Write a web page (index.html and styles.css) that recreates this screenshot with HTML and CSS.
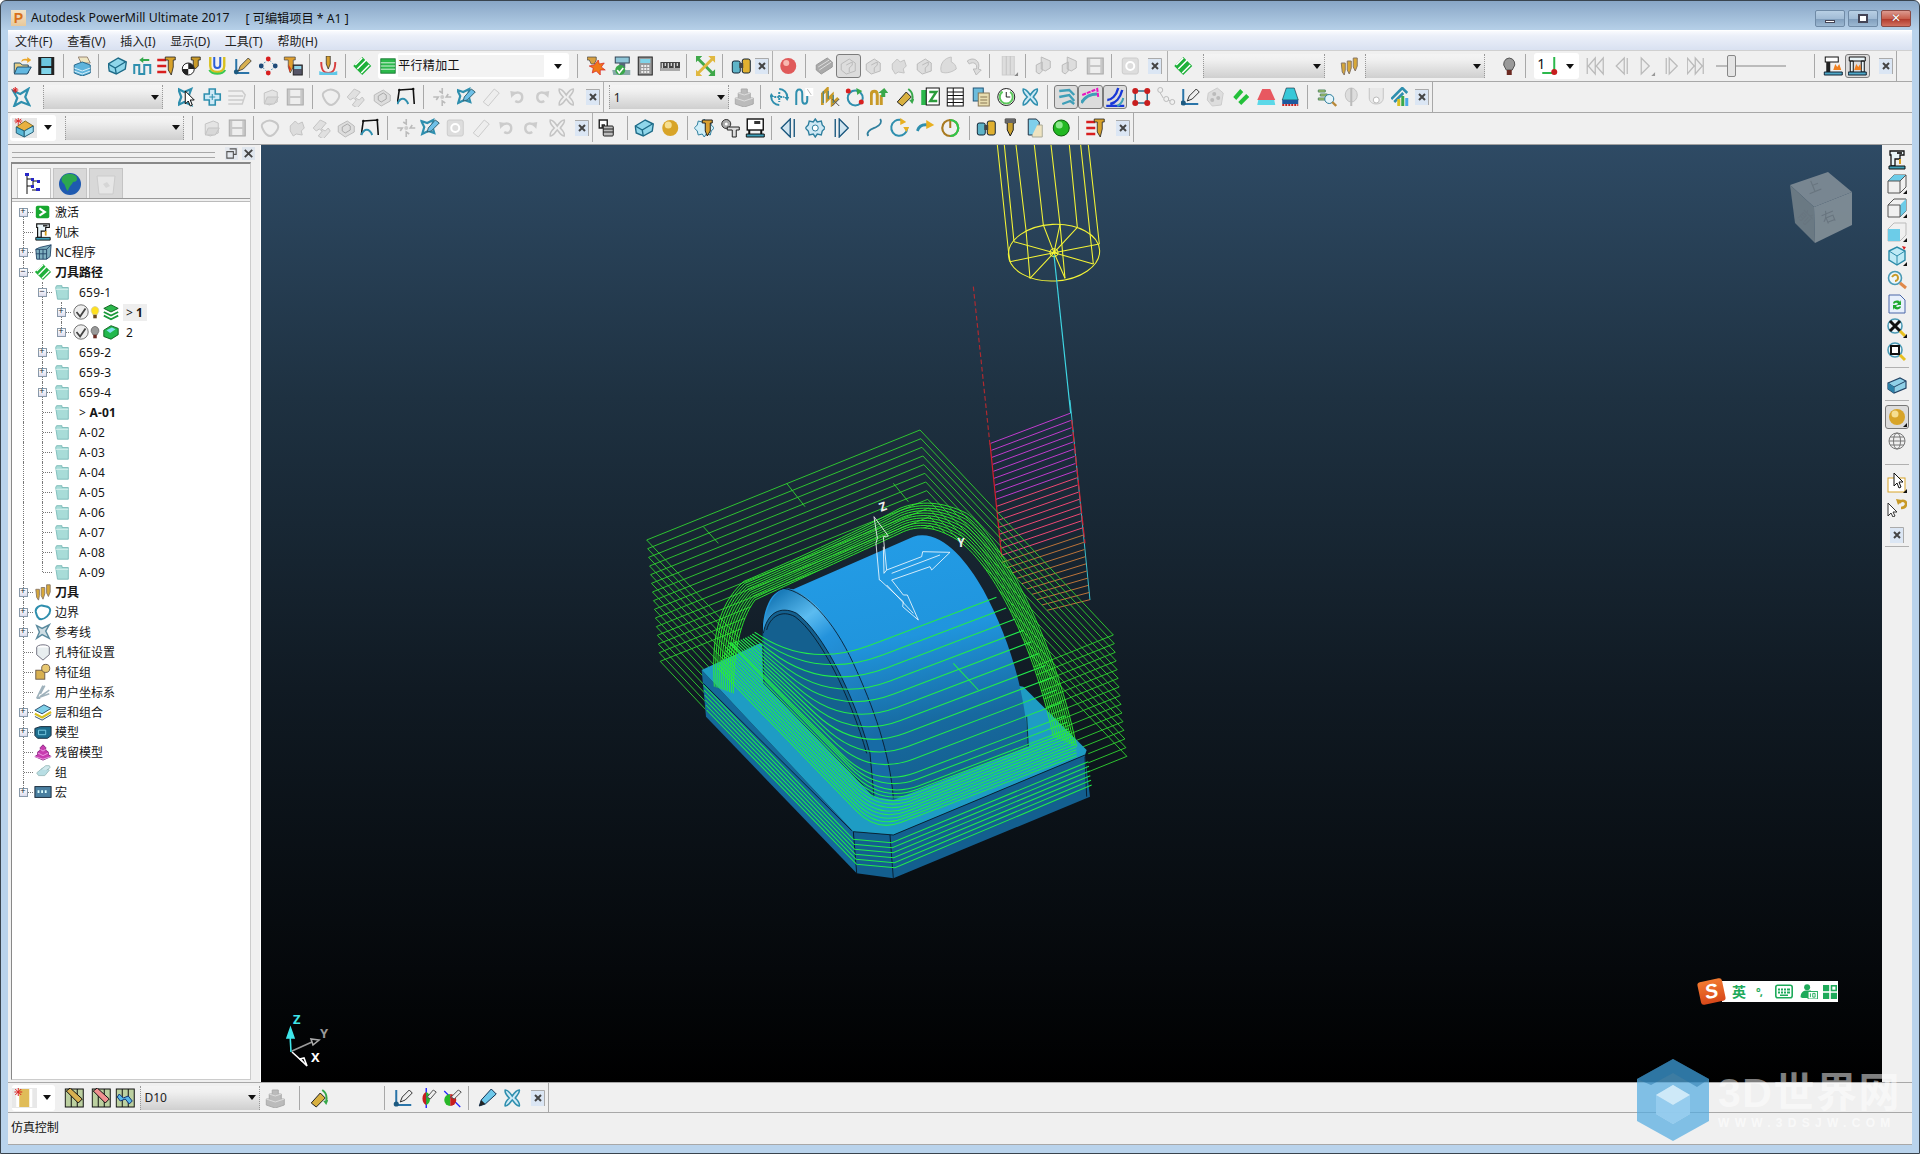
FILE: index.html
```html
<!DOCTYPE html>
<html lang="zh">
<head>
<meta charset="utf-8">
<title>Autodesk PowerMill Ultimate 2017</title>
<link rel="stylesheet" href="styles.css">
</head>
<body>
<svg class="defs" aria-hidden="true">
<symbol id="open" viewBox="0 0 20 20"><path d="M2 7h6l2 2h6v8H2z" fill="#e8cf86" stroke="#24506e"/><path d="M2 18l3-7h14l-4 7z" fill="#63b8e0" stroke="#24506e"/><path d="M9 6c0-3 3-4 6-3V1l4 3-4 3V5c-3-1-5 0-6 1z" fill="#eaa62a"/></symbol>
<symbol id="save" viewBox="0 0 20 20"><rect x="2" y="1" width="16" height="18" fill="#222"/><rect x="5" y="2" width="10" height="8" fill="#6cc6de"/><rect x="5" y="12" width="10" height="6" fill="#7fd3e8"/></symbol>
<symbol id="batch" viewBox="0 0 20 20"><path d="M6 1h9l3 6H9z" fill="#eee5c0" stroke="#987"/><path d="M2 9l8-3 8 3v8l-8 3-8-3z" fill="#5fb4dc" stroke="#2a6b8e"/><path d="M2 12l8 3 8-3M2 15l8 3 8-3" stroke="#d8f0fa" fill="none"/></symbol>
<symbol id="block" viewBox="0 0 20 20"><path d="M1 8l10-6 8 4-1 7-9 5-7-3z" fill="#8fd6ea" stroke="#1e6b88" stroke-width="1.4"/><path d="M1 8l7 4 10-6M8 12l1 6" stroke="#1e6b88" fill="none" stroke-width="1.4"/></symbol>
<symbol id="leads" viewBox="0 0 20 20"><path d="M2 18V9h5v9h5V9h6v9" fill="none" stroke="#2f8fae" stroke-width="2"/><path d="M7 4l4-3v2h6v2h-6v2z" fill="#33a84a"/></symbol>
<symbol id="tp" viewBox="0 0 20 20"><path d="M1 4h9M1 10h9M1 16h9" stroke="#d81e1e" stroke-width="2.4"/><path d="M9 1h10v3h-2v7l-2 8-3-5V4H9z" fill="#d8a22a" stroke="#222" stroke-width=".8"/></symbol>
<symbol id="ball" viewBox="0 0 20 20"><path d="M10 1h9v3h-2v6l-3 3-2-2V4h-2z" fill="#c99a2a" stroke="#222" stroke-width=".8"/><circle cx="7" cy="13" r="6" fill="#fff" stroke="#222"/><path d="M7 7a6 6 0 0 1 6 6H7zM7 13v6a6 6 0 0 1-6-6z" fill="#222"/></symbol>
<symbol id="uu" viewBox="0 0 20 20"><path d="M3 1v9c0 8 14 8 14 0V1" fill="none" stroke="#d8c020" stroke-width="2.4"/><path d="M7 1v8c0 4 6 4 6 0V1" fill="none" stroke="#2a5fd8" stroke-width="2"/><path d="M2 14c3 5 13 5 16 0" fill="none" stroke="#3cc850" stroke-width="2"/></symbol>
<symbol id="axpen" viewBox="0 0 20 20"><path d="M4 3v14h13" fill="none" stroke="#2a74a8" stroke-width="2"/><circle cx="4" cy="16" r="2.4" fill="#1e5a80"/><path d="M6 15l2-5 8-8 3 3-8 8z" fill="#d8b050" stroke="#333" stroke-width=".8"/></symbol>
<symbol id="dots" viewBox="0 0 20 20"><path d="M10 3L3 10l7 7 7-7z" fill="none" stroke="#48a" stroke-dasharray="2 2"/><circle cx="10" cy="3" r="2.4" fill="#d81e1e"/><circle cx="3" cy="10" r="2.4" fill="#1e4a78"/><circle cx="17" cy="10" r="2.4" fill="#1e4a78"/><circle cx="10" cy="17" r="2.4" fill="#d81e1e"/></symbol>
<symbol id="tcalc" viewBox="0 0 20 20"><path d="M1 1h11v3h-2v7l-3 6-2-6V4H1z" fill="#e0a030" stroke="#444" stroke-width=".7"/><path d="M5 8l3 5-2 3z" fill="#d83820"/><rect x="10" y="9" width="9" height="10" fill="#556" stroke="#222"/><rect x="11" y="10" width="7" height="3" fill="#8fd6ea"/></symbol>
<symbol id="cutsurf" viewBox="0 0 20 20"><path d="M8 0h4v8l-2 5-2-5z" fill="#d8a030" stroke="#222" stroke-width=".7"/><path d="M3 6c0 8 2 11 7 11s7-3 7-11" fill="none" stroke="#d84040" stroke-width="2"/><path d="M1 15c4 2 14 2 18 0v4H1z" fill="#5fc8e8"/></symbol>
<symbol id="gs" viewBox="0 0 20 20"><path d="M10 1l9 9-9 9-9-9z" fill="#1fb13a"/><path d="M3 9l7-7M5 13l9-9M9 17l8-8" stroke="#fff" stroke-width="1.5"/></symbol>
<symbol id="glist" viewBox="0 0 20 20"><rect x="1" y="1" width="18" height="18" fill="#2cb84c" stroke="#0d6e28"/><path d="M1 6h18M1 10h18M1 14h18" stroke="#dff5e3" stroke-width="1.2"/></symbol>
<symbol id="burst" viewBox="0 0 20 20"><path d="M1 1h9v3L8 8 5 8 3 4H1z" fill="#d8a040" stroke="#444" stroke-width=".7"/><path d="M12 4l1 4 5-1-3 4 4 3-5 0 0 5-4-4-4 2 1-5-4-2 5-1z" fill="#f07818" stroke="#d82020" stroke-width=".7"/></symbol>
<symbol id="chk" viewBox="0 0 20 20"><rect x="4" y="1" width="14" height="6" fill="#8fc6d8" stroke="#345"/><rect x="8" y="7" width="6" height="5" fill="#567"/><path d="M2 19l-1-5h18v5z" fill="#8aa"/><circle cx="9" cy="14" r="5" fill="#3aa84a"/><path d="M6 14l2 3 4-5" stroke="#fff" stroke-width="1.6" fill="none"/></symbol>
<symbol id="calc" viewBox="0 0 20 20"><rect x="3" y="1" width="14" height="18" fill="#999" stroke="#222"/><rect x="5" y="3" width="10" height="4" fill="#7fd3e8"/><path d="M6 9h2v2H6zM9 9h2v2H9zM12 9h2v2h-2zM6 12h2v2H6zM9 12h2v2H9zM12 12h2v2h-2zM6 15h2v2H6zM9 15h2v2H9zM12 15h2v2h-2z" fill="#eee"/></symbol>
<symbol id="ruler" viewBox="0 0 20 20"><rect x="0" y="6" width="20" height="9" fill="#444"/><path d="M2 7v5M5 7v3M8 7v5M11 7v3M14 7v5M17 7v3" stroke="#fff"/><rect x="0" y="12" width="20" height="3" fill="#aaa"/></symbol>
<symbol id="xarrows" viewBox="0 0 20 20"><path d="M3 3l14 14" stroke="#3fa84a" stroke-width="3"/><path d="M17 3L3 17" stroke="#e0b840" stroke-width="3"/><path d="M0 0h7L0 7zM20 20h-7l7-7z" fill="#3fa84a"/><path d="M20 0v7l-7-7zM0 20v-7l7 7z" fill="#e0b840"/></symbol>
<symbol id="binoc" viewBox="0 0 20 20"><rect x="1" y="5" width="8" height="12" rx="2" fill="#5fb4c8" stroke="#123"/><rect x="11" y="3" width="8" height="14" rx="2" fill="#e0b030" stroke="#123"/><rect x="8" y="7" width="4" height="5" fill="#444"/></symbol>
<symbol id="xb" viewBox="0 0 14 16"><rect width="14" height="16" fill="#dbe6f4"/><path d="M0 .5h13.5V16" fill="none" stroke="#aaa"/><path d="M4 5l6 6M10 5l-6 6" stroke="#444" stroke-width="2"/></symbol>
<symbol id="redball" viewBox="0 0 20 20"><circle cx="10" cy="10" r="8" fill="#e05a5a"/><circle cx="8" cy="7" r="3" fill="#f8b8b0"/></symbol>
<symbol id="gblock" viewBox="0 0 20 20"><path d="M2 9l11-7 5 4v5l-11 7-5-4z" fill="#aaa" stroke="#999"/><path d="M4 11l11-7M5 14l12-8" stroke="#ddd"/></symbol>
<symbol id="gface" viewBox="0 0 20 20"><path d="M3 8l8-5 6 4v8l-9 3-5-4z" fill="#ddd" stroke="#bbb"/><path d="M8 9l6-3v3l-3 3v4" fill="none" stroke="#bbb"/></symbol>
<symbol id="gstar" viewBox="0 0 20 20"><path d="M3 8l5-5 3 3 4-2 2 6-3 3 1 4-6-1-3 2-3-5z" fill="#dcdcdc" stroke="#c4c4c4"/></symbol>
<symbol id="gcap" viewBox="0 0 20 20"><path d="M3 16c-2-8 3-14 10-15v5c3 1 5 4 5 7-4 3-10 5-15 3z" fill="#dcdcdc" stroke="#c4c4c4"/></symbol>
<symbol id="garrow" viewBox="0 0 20 20"><path d="M4 5c6-5 14 0 11 8l3 1-5 5-3-6 3 0C15 8 10 5 6 8z" fill="#dcdcdc" stroke="#bbb"/></symbol>
<symbol id="gbar" viewBox="0 0 20 20"><rect x="4" y="0" width="12" height="19" fill="#ddd" stroke="#ccc"/><path d="M8 0v19M12 0v19" stroke="#c4c4c4"/><path d="M20 20h-4l4-4z" fill="#888"/></symbol>
<symbol id="gcopy" viewBox="0 0 20 20"><path d="M7 1l9 4v7l-5 3-4-2zM2 9l6-3v9l-3 3-3-2z" fill="#ddd" stroke="#bbb"/></symbol>
<symbol id="gfloppy" viewBox="0 0 20 20"><rect x="2" y="2" width="16" height="16" fill="#c8c8c8" stroke="#aaa"/><rect x="5" y="3" width="10" height="6" fill="#eee"/><rect x="5" y="11" width="10" height="6" fill="#eee"/></symbol>
<symbol id="gopen" viewBox="0 0 20 20"><path d="M3 6l8-3 5 2v10l-8 3-5-2z" fill="#e4e4e4" stroke="#c4c4c4"/><path d="M3 17l3-7h11l-4 7z" fill="#d8d8d8" stroke="#c4c4c4"/></symbol>
<symbol id="gzero" viewBox="0 0 20 20"><rect x="2" y="2" width="16" height="16" rx="2" fill="#ddd" stroke="#ccc"/><circle cx="10" cy="10" r="4" fill="none" stroke="#fff" stroke-width="2"/></symbol>
<symbol id="gsq" viewBox="0 0 20 20"><path d="M2 10L9 2l6 3-5 6 4 2 3-3 2 3-7 8-5-3 4-5-3-2-3 2z" fill="#e0e0e0" stroke="#c4c4c4"/></symbol>
<symbol id="gbound" viewBox="0 0 20 20"><path d="M3 5c4-3 6-3 9-2s6 3 6 6-5 9-8 9-5-2-7-6-2-5 0-7z" fill="none" stroke="#c8c8c8" stroke-width="2"/></symbol>
<symbol id="ghole" viewBox="0 0 20 20"><path d="M2 8l9-5 7 5v6l-9 5-7-5z" fill="#ddd" stroke="#bbb"/><path d="M6 9l5-3 3 2v4l-5 3-3-2z" fill="none" stroke="#aaa"/></symbol>
<symbol id="poly" viewBox="0 0 20 20"><path d="M3 3l14-1 1 15M3 3L1 17" fill="none" stroke="#111" stroke-width="1.6"/><path d="M1 17c3-7 8-7 11 0" fill="none" stroke="#2f8fae" stroke-width="2"/><circle cx="3" cy="3" r="1.2" fill="#111"/><circle cx="17" cy="2" r="1.2" fill="#111"/></symbol>
<symbol id="gspin" viewBox="0 0 20 20"><path d="M10 1v5l-3-2M10 19v-5l3 2M1 10h5l-2 3M19 10h-5l2-3" fill="none" stroke="#bbb" stroke-width="1.6"/><circle cx="10" cy="10" r="2" fill="#ccc"/></symbol>
<symbol id="xpen" viewBox="0 0 20 20"><path d="M1 3l6 2 6-3-1 6 2 7-6-2-6 3 2-7z" fill="none" stroke="#2f8fae" stroke-width="2.2"/><path d="M8 10l7-8 4 3-8 8-4 1z" fill="#6ec0e8" stroke="#367"/></symbol>
<symbol id="eraser" viewBox="0 0 20 20"><path d="M2 15L13 2l5 4L7 19z" fill="#eee" stroke="#ccc"/></symbol>
<symbol id="gundo" viewBox="0 0 20 20"><path d="M5 8c4-4 10-3 10 2s-4 6-7 4" fill="none" stroke="#ccc" stroke-width="2.4"/><path d="M3 4l6 1-5 6z" fill="#ccc"/></symbol>
<symbol id="gredo" viewBox="0 0 20 20"><path d="M15 8c-4-4-10-3-10 2s4 6 7 4" fill="none" stroke="#ccc" stroke-width="2.4"/><path d="M17 4l-6 1 5 6z" fill="#ccc"/></symbol>
<symbol id="gx" viewBox="0 0 20 20"><path d="M3 2c3 0 5 3 7 6 2-3 4-6 7-6 1 3-3 6-4 8 2 2 5 5 4 8-3 0-5-4-7-6-2 2-4 6-7 6-1-3 2-6 4-8-2-2-5-5-4-8z" fill="none" stroke="#c4c4c4" stroke-width="1.6"/></symbol>
<symbol id="bx" viewBox="0 0 20 20"><path d="M3 2c3 0 5 3 7 6 2-3 4-6 7-6 1 3-3 6-4 8 2 2 5 5 4 8-3 0-5-4-7-6-2 2-4 6-7 6-1-3 2-6 4-8-2-2-5-5-4-8z" fill="#cfeaf6" stroke="#2f8fae" stroke-width="1.6"/></symbol>
<symbol id="star" viewBox="0 0 20 20"><path d="M2 4l7 3 8-5-3 8 4 8-8-3-7 4 3-8z" fill="none" stroke="#2f8fae" stroke-width="2.2"/><path d="M4 0v6M1 3h6M2 1l4 4M6 1L2 5" stroke="#d81e1e"/></symbol>
<symbol id="xstar" viewBox="0 0 20 20"><path d="M1 2l6 3 7-3-3 8 3 8-7-3-6 3 3-8z" fill="none" stroke="#2f8fae" stroke-width="2.2"/><path d="M8 4v13l3-3 2 5 2-1-2-5h4z" fill="#fff" stroke="#111"/></symbol>
<symbol id="cross" viewBox="0 0 20 20"><path d="M7 2h6v5h5v6h-5v5H7v-5H2V7h5z" fill="#cfeaf6" stroke="#2f8fae" stroke-width="1.6"/><path d="M7 10h6M10 7v6" stroke="#2f8fae"/></symbol>
<symbol id="gwave" viewBox="0 0 20 20"><path d="M2 4h14l3 4-3 9H2M2 9h15M2 13h15" fill="none" stroke="#ccc" stroke-width="1.4"/></symbol>
<symbol id="gstack" viewBox="0 0 20 20"><path d="M7 2h6v4h3v5h3v6l-9 3-9-3v-6h3V6h3z" fill="#bbb" stroke="#aaa"/><path d="M1 11l9 3 9-3M4 6l6 2 6-2" stroke="#ddd" fill="none"/></symbol>
<symbol id="spin" viewBox="0 0 20 20"><path d="M10 2a8 8 0 0 1 8 8M10 18a8 8 0 0 1-8-8" fill="none" stroke="#2f8fae" stroke-width="2"/><path d="M10 5v10M5 10h10" stroke="#2f8fae" stroke-width="2" stroke-dasharray="2 1"/><path d="M15 10l3 4 2-4zM5 10L2 6 0 10z" fill="#2f8fae"/></symbol>
<symbol id="pw" viewBox="0 0 20 20"><path d="M2 18V7c0-6 6-6 6 0v6c0 5 5 5 5 0V5" fill="none" stroke="#2f8fae" stroke-width="2"/><rect x="11" y="1" width="8" height="8" fill="#fff"/><path d="M13 2l4 6" stroke="#bbb"/></symbol>
<symbol id="gw" viewBox="0 0 20 20"><path d="M2 18V7l5-5v11l5-5v9l6-6" fill="none" stroke="#c89a28" stroke-width="3"/><path d="M3 4v12M8 4v8M13 8v8" stroke="#2f7f9e"/><path d="M12 12l7 7M19 12l-7 7" stroke="#555"/></symbol>
<symbol id="cycle" viewBox="0 0 20 20"><circle cx="10" cy="11" r="7.5" fill="none" stroke="#2f8fae" stroke-width="2"/><path d="M11 1l6 3-5 4z" fill="#36a84a"/><circle cx="3" cy="4" r="2.5" fill="#d82020"/><circle cx="16" cy="15" r="2.5" fill="#d82020"/></symbol>
<symbol id="goldup" viewBox="0 0 20 20"><path d="M2 18V8c0-5 6-5 6 0v10M12 18V8" fill="none" stroke="#c89a28" stroke-width="3"/><path d="M9 6l6-5 4 5h-3v4h-4V6z" fill="#3aa84a"/></symbol>
<symbol id="pipe" viewBox="0 0 20 20"><path d="M3 15L12 5l5 5-9 9z" fill="#d8b040" stroke="#222"/><path d="M14 2c3 2 5 6 4 11" fill="none" stroke="#36a84a" stroke-width="2"/><path d="M15 13l5-1-2 5z" fill="#36a84a"/></symbol>
<symbol id="greenz" viewBox="0 0 20 20"><rect x="1" y="3" width="8" height="15" fill="#2cb84c"/><rect x="6" y="1" width="13" height="17" fill="#fff" stroke="#111"/><path d="M9 5h7l-6 9h7" fill="none" stroke="#2c9c3c" stroke-width="2.4"/></symbol>
<symbol id="table" viewBox="0 0 20 20"><rect x="2" y="1" width="16" height="18" fill="#fff" stroke="#111"/><path d="M2 5h16M2 8.500h16M2 12h16M2 15.500h16M8 1v18" stroke="#111"/></symbol>
<symbol id="docs" viewBox="0 0 20 20"><rect x="2" y="1" width="10" height="13" fill="#6cbcdc" stroke="#257"/><rect x="7" y="6" width="11" height="13" fill="#e8ddb0" stroke="#875"/><path d="M9 10h7M9 13h7M9 16h7" stroke="#875"/></symbol>
<symbol id="clock" viewBox="0 0 20 20"><circle cx="10" cy="10" r="8.500" fill="#fff" stroke="#222"/><circle cx="10" cy="10" r="6.500" fill="none" stroke="#5cc85c" stroke-width="2" stroke-dasharray="26 8"/><path d="M10 5v5h4" fill="none" stroke="#222"/></symbol>
<symbol id="lines" viewBox="0 0 20 20"><path d="M3 4l10-1 5 5M3 10l10-2 5 6M6 17l8-3 4 3" fill="none" stroke="#3f9fb8" stroke-width="2.4"/></symbol>
<symbol id="pinkcorner" viewBox="0 0 20 20"><path d="M1 16c4-7 9-9 16-9" fill="none" stroke="#3f9fb8" stroke-width="3"/><path d="M2 8l15-6 1 8" fill="none" stroke="#e818c0" stroke-width="2" stroke-dasharray="4 1"/></symbol>
<symbol id="bluearcs" viewBox="0 0 20 20"><path d="M2 13c4 0 9-4 11-12M5 17c5-1 10-6 12-14M1 19h18" fill="none" stroke="#1838d8" stroke-width="2.4"/><path d="M12 19c2-1 5-3 6-8" fill="none" stroke="#3f9fb8" stroke-width="2"/></symbol>
<symbol id="redsq" viewBox="0 0 20 20"><path d="M4 4h12v12H4z" fill="none" stroke="#2f6f8e" stroke-width="1.5"/><circle cx="4" cy="4" r="3" fill="#c81e1e"/><circle cx="16" cy="4" r="3" fill="#c81e1e"/><circle cx="4" cy="16" r="3" fill="#c81e1e"/><circle cx="16" cy="16" r="3" fill="#c81e1e"/></symbol>
<symbol id="gsquig" viewBox="0 0 20 20"><circle cx="4" cy="3" r="2.500" fill="none" stroke="#bbb"/><circle cx="10" cy="12" r="2.500" fill="none" stroke="#bbb"/><circle cx="16" cy="15" r="2.500" fill="none" stroke="#bbb"/><path d="M4 6l3 5M12 13l2 1" stroke="#bbb"/></symbol>
<symbol id="gdisk" viewBox="0 0 20 20"><path d="M3 6l9-5 6 5-2 12-9 1-5-6z" fill="#ddd" stroke="#ccc"/><circle cx="9" cy="7" r="2" fill="#bbb"/><circle cx="13" cy="11" r="2" fill="#bbb"/><circle cx="7" cy="13" r="2" fill="#bbb"/></symbol>
<symbol id="gs2" viewBox="0 0 20 20"><path d="M2 10l7-8 3 3-7 8zM7 15l8-8 3 3-8 8z" fill="#24c03a"/></symbol>
<symbol id="pyr" viewBox="0 0 20 20"><path d="M6 2h8l5 11H1z" fill="#e85860"/><path d="M2 13h16l1 5H1z" fill="#5cd8e8"/></symbol>
<symbol id="pyr2" viewBox="0 0 20 20"><path d="M6 1h8l4 12H2z" fill="#38c8d8" stroke="#123" stroke-width=".6"/><path d="M2 13h16v4H2z" fill="#1e5a9e"/><path d="M2 18h16" stroke="#c82020" stroke-dasharray="2 1" stroke-width="2"/></symbol>
<symbol id="find" viewBox="0 0 20 20"><path d="M1 3h7v2H1zM3 7h7v2H3zM1 11h7v2H1z" fill="#b8d060" stroke="#586"/><circle cx="12" cy="12" r="4.500" fill="#e4f4fa" stroke="#2f7f9e"/><path d="M15 15l4 4" stroke="#b88838" stroke-width="2.4"/></symbol>
<symbol id="gpill" viewBox="0 0 20 20"><ellipse cx="10" cy="8" rx="6" ry="7" fill="#ddd" stroke="#c4c4c4"/><path d="M10 1v18" stroke="#bbb" stroke-width="2"/></symbol>
<symbol id="gu" viewBox="0 0 20 20"><path d="M3 1v10c0 8 14 8 14 0V1" fill="#e8e8e8" stroke="#c4c4c4"/><circle cx="10" cy="13" r="3" fill="#fff" stroke="#bbb"/></symbol>
<symbol id="chart" viewBox="0 0 20 20"><path d="M1 12L12 1l5 5M4 15L13 6" fill="none" stroke="#2f8fae" stroke-width="2.6"/><rect x="7" y="12" width="3" height="7" fill="#d8c020"/><rect x="11" y="9" width="3" height="10" fill="#3aa84a"/><rect x="15" y="11" width="3" height="8" fill="#4aa8e8"/></symbol>
<symbol id="bulbg" viewBox="0 0 20 20"><path d="M10 2a6 6 0 0 1 4 10l-1 2H7l-1-2A6 6 0 0 1 10 2z" fill="#999" stroke="#555"/><rect x="7.500" y="14" width="5" height="5" fill="#6b2a22"/></symbol>
<symbol id="bulby" viewBox="0 0 20 20"><path d="M10 2a6 6 0 0 1 4 10l-1 2H7l-1-2A6 6 0 0 1 10 2z" fill="#ffe020" stroke="#cca"/><rect x="7.500" y="14" width="5" height="5" fill="#6b4a22"/></symbol>
<symbol id="ucsred" viewBox="0 0 20 20"><path d="M14 1v16H2" fill="none" stroke="#2cb84c" stroke-width="2"/><circle cx="14" cy="16" r="3" fill="#c81e1e"/></symbol>
<symbol id="gfirst" viewBox="0 0 20 20"><path d="M3 2v16M11 2L4 10l7 8zM19 2l-7 8 7 8z" fill="#eee" stroke="#bbb" stroke-width="1.3"/></symbol>
<symbol id="gprev" viewBox="0 0 20 20"><path d="M13 2L5 10l8 8zM16 2v16" fill="#eee" stroke="#bbb" stroke-width="1.3"/></symbol>
<symbol id="gplay" viewBox="0 0 20 20"><path d="M6 2l8 8-8 8z" fill="#eee" stroke="#bbb" stroke-width="1.3"/><path d="M20 20h-4l4-4z" fill="#999"/></symbol>
<symbol id="gnext" viewBox="0 0 20 20"><path d="M7 2l8 8-8 8zM4 2v16" fill="#eee" stroke="#bbb" stroke-width="1.3"/></symbol>
<symbol id="glast" viewBox="0 0 20 20"><path d="M17 2v16M9 2l7 8-7 8zM1 2l7 8-7 8z" fill="#eee" stroke="#bbb" stroke-width="1.3"/></symbol>
<symbol id="machfire" viewBox="0 0 20 20"><rect x="2" y="1" width="13" height="5" fill="#fff" stroke="#111"/><rect x="3" y="6" width="4" height="10" fill="#222"/><path d="M10 14l2-6 2 3 2-3 2 6z" fill="#f08020"/><path d="M1 16h18v3H1z" fill="#4fa8c8" stroke="#123"/></symbol>
<symbol id="mach" viewBox="0 0 20 20"><path d="M3 1h14v4h-4v4H8v7H4V5H3z" fill="#e8f4f8" stroke="#111" stroke-width="1.3"/><rect x="10" y="2" width="5" height="2" fill="#333"/><path d="M2 16h16v3H2z" fill="#3f9fb8" stroke="#111"/><path d="M13 9v5" stroke="#d8a020" stroke-width="2"/></symbol>
<symbol id="fire" viewBox="0 0 20 20"><path d="M2 1h16v4H2zM3 5h3v11H3zM14 5h3v11h-3z" fill="#e8f4f8" stroke="#111"/><path d="M7 14l2-6 2 3 2-3 1 6z" fill="#f08020"/><path d="M1 16h18v3H1z" fill="#4fa8c8" stroke="#123"/></symbol>
<symbol id="box2" viewBox="0 0 20 20"><path d="M2 9l9-6 8 5-9 5z" fill="#e8b040" stroke="#86702a"/><path d="M2 9l8 4v6l-8-4z" fill="#58b8d8" stroke="#24607a"/><path d="M10 13l9-5v6l-9 5z" fill="#9adcf0" stroke="#24607a"/><path d="M0 3h8M4 0v7M1 1l6 4M7 1L1 5" stroke="#e03030"/></symbol>
<symbol id="goldball" viewBox="0 0 20 20"><circle cx="10" cy="10" r="8" fill="#d8a428"/><circle cx="8" cy="7" r="3.500" fill="#f6de90"/></symbol>
<symbol id="cfg" viewBox="0 0 20 20"><path d="M10 1l2 3 4-1 1 4 3 3-3 3-1 4-4-1-2 3-2-3-4 1-1-4-3-3 3-3 1-4 4 1z" fill="#d0eef8" stroke="#2f7f9e"/><path d="M8 2h10v3h-2v8l-3 5-2-5V5H8z" fill="#d8a030" stroke="#222"/></symbol>
<symbol id="gear" viewBox="0 0 20 20"><circle cx="6" cy="6" r="4.500" fill="#aaa" stroke="#333"/><circle cx="6" cy="6" r="1.500" fill="#fff"/><path d="M7 9h12v3h-3v7h-4v-7H7z" fill="#ddd" stroke="#222"/></symbol>
<symbol id="machb" viewBox="0 0 20 20"><rect x="2" y="1" width="16" height="11" fill="#fff" stroke="#111" stroke-width="1.4"/><rect x="9" y="3" width="6" height="3" fill="#333"/><path d="M4 12v4M16 12v4" stroke="#111" stroke-width="2"/><path d="M1 16h18v3H1z" fill="#3f9fb8" stroke="#111"/></symbol>
<symbol id="lprev" viewBox="0 0 20 20"><path d="M12 1L3 10l9 9zM16 1v18" fill="#d0e4f0" stroke="#1e5a80" stroke-width="1.4"/></symbol>
<symbol id="lnext" viewBox="0 0 20 20"><path d="M8 1l9 9-9 9zM4 1v18" fill="#d0e4f0" stroke="#1e5a80" stroke-width="1.4"/></symbol>
<symbol id="lgear" viewBox="0 0 20 20"><path d="M10 1l2 3 4-1 1 4 3 3-3 3-1 4-4-1-2 3-2-3-4 1-1-4-3-3 3-3 1-4 4 1z" fill="#cfe8f4" stroke="#2f7f9e" stroke-width="1.4"/><circle cx="10" cy="10" r="3" fill="#fff" stroke="#2f7f9e"/></symbol>
<symbol id="wave" viewBox="0 0 20 20"><path d="M3 18c-3-5 4-7 8-9s6-5 4-8" fill="none" stroke="#2f7f9e" stroke-width="1.8"/></symbol>
<symbol id="ring" viewBox="0 0 20 20"><path d="M12 2a8 8 0 1 0 6 8" fill="none" stroke="#2f8fae" stroke-width="2"/><path d="M11 0l6 4-6 3zM14 9l6 0-3 5z" fill="#e8b020"/></symbol>
<symbol id="link" viewBox="0 0 20 20"><path d="M1 13c2-6 6-7 11-6" fill="none" stroke="#2f8fae" stroke-width="3"/><path d="M10 2l8 5-8 4z" fill="#e8b020"/></symbol>
<symbol id="timer" viewBox="0 0 20 20"><circle cx="10" cy="10" r="8" fill="none" stroke="#a87a20" stroke-width="2.2"/><path d="M10 10V1" stroke="#a87a20" stroke-width="2"/><path d="M10 2a8 8 0 0 1 0 16" fill="none" stroke="#2cc84c" stroke-width="2.200"/></symbol>
<symbol id="tool" viewBox="0 0 20 20"><path d="M5 1h10v4h-2v7l-3 6-3-6V5H5z" fill="#c8a030" stroke="#222"/><rect x="5" y="1" width="10" height="4" fill="#666"/></symbol>
<symbol id="doc" viewBox="0 0 20 20"><path d="M3 1h8l3 3v13H3z" fill="#7fcfea" stroke="#234"/><path d="M12 7h5v12H7v-2" fill="#eee3c0" stroke="#aa9"/></symbol>
<symbol id="green" viewBox="0 0 20 20"><circle cx="10" cy="10" r="8" fill="#22b822" stroke="#0b5e0b"/><circle cx="8" cy="7" r="3.500" fill="#8ce88c"/></symbol>
<symbol id="check" viewBox="0 0 20 20"><circle cx="10" cy="10" r="8" fill="#eee" stroke="#666"/><path d="M5 10l4 5 6-9" fill="none" stroke="#444" stroke-width="2"/></symbol>
<symbol id="key" viewBox="0 0 20 20"><path d="M3 2h8v7H8v-2H6v3H3z" fill="#fff" stroke="#222" stroke-width="1.400"/><rect x="7" y="8" width="10" height="10" rx="1" fill="#bbb" stroke="#222"/><path d="M7 11h10M7 14h10" stroke="#222"/></symbol>
<symbol id="tool2" viewBox="0 0 20 20"><rect x="2" y="1" width="16" height="18" fill="#fff"/><rect x="5" y="1" width="10" height="18" fill="#e0bc58"/><path d="M4 0v8M0 4h8M1 1l6 6M7 1L1 7" stroke="#d82020"/></symbol>
<symbol id="book1" viewBox="0 0 20 20"><rect x="1" y="1" width="18" height="18" fill="#bcd0a0" stroke="#111"/><path d="M7 1v18M13 1v18" stroke="#111"/><path d="M2 3l12 12 4-4L6 0z" fill="#d8b050" stroke="#111"/></symbol>
<symbol id="book2" viewBox="0 0 20 20"><rect x="1" y="1" width="18" height="18" fill="#bcd0a0" stroke="#111"/><path d="M7 1v18M13 1v18" stroke="#111"/><path d="M2 3l12 12 4-4L6 0z" fill="#f09090" stroke="#111"/></symbol>
<symbol id="book3" viewBox="0 0 20 20"><rect x="1" y="1" width="18" height="18" fill="#bcd0a0" stroke="#111"/><path d="M7 1v18M13 1v18" stroke="#111"/><path d="M4 6l4 4 5-2 4 5-3 3-4-5-5 2-3-4z" fill="#58b8e8" stroke="#137"/></symbol>
<symbol id="axpen2" viewBox="0 0 20 20"><path d="M3 2v15h15" fill="none" stroke="#2a74a8" stroke-width="2"/><circle cx="3" cy="16" r="2.600" fill="#1e5a80"/><path d="M7 14l2-5 7-7 3 3-7 7z" fill="#eee" stroke="#333"/></symbol>
<symbol id="rgb" viewBox="0 0 20 20"><path d="M9 0v20" stroke="#22f" stroke-width="1.400"/><path d="M9 4a6 7 0 0 0 0 13z" fill="#c81e1e"/><path d="M9 4a6 7 0 0 1 0 13z" fill="#28b828"/><path d="M10 9l6-7 3 2-6 7z" fill="#eee" stroke="#555"/></symbol>
<symbol id="grb" viewBox="0 0 20 20"><path d="M2 3l16 16M2 19" stroke="#22f" stroke-width="1.200"/><path d="M8 6a6 6 0 0 0 0 12z" fill="#28b828"/><path d="M8 6a6 6 0 0 1 0 12z" fill="#c81e1e"/><path d="M9 9l7-7 3 2-7 7z" fill="#eee" stroke="#555"/></symbol>
<symbol id="bpen" viewBox="0 0 20 20"><path d="M2 18l2-6L14 1l5 5L8 16z" fill="#6ec8ea" stroke="#135"/><path d="M2 18l2-6 4 4z" fill="#222"/></symbol>
<symbol id="c-top" viewBox="0 0 20 20"><path d="M1 7l6-6h12v12l-6 6H1z" fill="none" stroke="#555"/><path d="M1 7l6-6h12l-6 6z" fill="#6ccce8"/><path d="M13 7v12M1 7h12l6-6" fill="none" stroke="#555"/><path d="M20 20h-4l4-4z" fill="#111"/></symbol>
<symbol id="c-right" viewBox="0 0 20 20"><path d="M1 7l6-6h12v12l-6 6H1z" fill="none" stroke="#555"/><path d="M13 7l6-6v12l-6 6z" fill="#6ccce8"/><path d="M13 7v12M1 7h12" fill="none" stroke="#555"/><path d="M20 20h-4l4-4z" fill="#111"/></symbol>
<symbol id="c-front" viewBox="0 0 20 20"><path d="M1 7l6-6h12v12l-6 6H1z" fill="none" stroke="#bbb"/><rect x="1" y="7" width="12" height="12" fill="#6ccce8"/><path d="M20 20h-4l4-4z" fill="#111"/></symbol>
<symbol id="c-iso" viewBox="0 0 20 20"><path d="M2 5l8-4 8 4v9l-8 5-8-5z" fill="#bfeaf6" stroke="#2a8aa8" stroke-width="1.400"/><path d="M2 5l8 5 8-5M10 10v9" fill="none" stroke="#2a8aa8"/><path d="M15 0l4 1-2 3z" fill="#d82020"/><path d="M20 20h-4l4-4z" fill="#111"/></symbol>
<symbol id="zback" viewBox="0 0 20 20"><circle cx="8" cy="8" r="6.500" fill="#eef6fa" stroke="#4a9ab5" stroke-width="1.600"/><path d="M5 7c2-3 6-3 6 1 0 2-2 3-3 3" fill="none" stroke="#c89a28" stroke-width="2"/><path d="M13 13l6 5" stroke="#e0884a" stroke-width="3"/></symbol>
<symbol id="refresh" viewBox="0 0 20 20"><path d="M2 1h11l5 5v13H2z" fill="#e8f0fc" stroke="#4a66a8"/><path d="M6 9c1-3 6-3 7-1l1-2v5h-5l2-1c-1-2-3-1-4 0zM14 13c-1 3-6 3-7 1l-1 2v-5h5l-2 1c1 2 3 1 4 0z" fill="#1fa82f"/></symbol>
<symbol id="zfit" viewBox="0 0 20 20"><circle cx="8" cy="8" r="7" fill="#eef6fa" stroke="#4a9ab5" stroke-width="1.600"/><path d="M3 3l10 10M13 3L3 13" stroke="#111" stroke-width="3"/><path d="M13 13l5 5" stroke="#e8c020" stroke-width="3"/><path d="M20 20h-4l4-4z" fill="#111"/></symbol>
<symbol id="zsq" viewBox="0 0 20 20"><circle cx="8" cy="8" r="7" fill="#eef6fa" stroke="#4a9ab5" stroke-width="1.600"/><rect x="4" y="4" width="8" height="8" fill="#fff" stroke="#111" stroke-width="2"/><path d="M13 13l5 5" stroke="#e8c020" stroke-width="3"/></symbol>
<symbol id="solid" viewBox="0 0 20 20"><path d="M1 8l12-5 6 3v7l-12 5-6-4z" fill="#8fd0e8" stroke="#246" stroke-width="1.200"/><path d="M1 8l6 4 12-6M7 12v6" fill="none" stroke="#246"/><path d="M1 8l6 4v6l-6-4z" fill="#2a80a8"/></symbol>
<symbol id="gball" viewBox="0 0 20 20"><circle cx="10" cy="10" r="8" fill="#d8a428"/><circle cx="8" cy="7" r="3.500" fill="#f6de90"/><path d="M20 20h-4l4-4z" fill="#111"/></symbol>
<symbol id="wireglobe" viewBox="0 0 20 20"><circle cx="10" cy="10" r="8" fill="none" stroke="#777"/><ellipse cx="10" cy="10" rx="3.500" ry="8" fill="none" stroke="#777"/><path d="M2 10h16M3 6h14M3 14h14" stroke="#777" fill="none"/></symbol>
<symbol id="cursel" viewBox="0 0 20 20"><rect x="1" y="5" width="17" height="14" fill="#fff" stroke="#d8a428"/><path d="M7 0v13l3-3 2 5 2-1-2-5h4z" fill="#fff" stroke="#111"/><path d="M20 20h-4l4-4z" fill="#111"/></symbol>
<symbol id="curund" viewBox="0 0 20 20"><path d="M1 6v13l3-3 2 4 2-1-2-4h4z" fill="#fff" stroke="#333"/><path d="M12 6c3-4 8-2 7 2-1 3-3 3-5 3" fill="none" stroke="#c89a28" stroke-width="2.600"/><path d="M9 2l6 1-4 5z" fill="#c89a28"/></symbol>
<symbol id="t-act" viewBox="0 0 20 20"><rect x="2" y="3" width="15" height="14" rx="2" fill="#17a82f"/><path d="M6 6l6 4-6 4" fill="none" stroke="#fff" stroke-width="2.400"/></symbol>
<symbol id="t-nc" viewBox="0 0 20 20"><path d="M2 7l4-2 13-3-1 13-4 3H3z" fill="#7fb0c0" stroke="#246"/><path d="M2 7h12v11M14 7l5-5M6 7v11M10 7v11M2 12h12" stroke="#246" fill="none"/></symbol>
<symbol id="t-tools" viewBox="0 0 20 20"><path d="M2 7h4v7l-1 5-2-3zM8 5h4v7l-2 6-2-4zM14 2h4v8l-2 5-2-4z" fill="#d8a838" stroke="#876"/></symbol>
<symbol id="t-bound" viewBox="0 0 20 20"><path d="M2 10c-1-5 5-8 8-7s8 0 8 5-6 10-10 10-5-4-6-8z" fill="#fff" stroke="#2f8fae" stroke-width="2.200"/></symbol>
<symbol id="t-ref" viewBox="0 0 20 20"><path d="M3 3l6 3 8-4-4 7 4 8-8-4-6 4 3-7z" fill="#d0dee4" stroke="#5a8a9e" stroke-width="1.600"/></symbol>
<symbol id="t-hole" viewBox="0 0 20 20"><ellipse cx="10" cy="5" rx="7" ry="3" fill="#fff" stroke="#667"/><path d="M3 5v8l7 6 7-6V5" fill="#e8eef0" stroke="#667"/></symbol>
<symbol id="t-feat" viewBox="0 0 20 20"><rect x="2" y="8" width="10" height="10" fill="#d8b050" stroke="#654"/><circle cx="13" cy="6" r="4.500" fill="#e8c870" stroke="#654"/></symbol>
<symbol id="t-ucs" viewBox="0 0 20 20"><path d="M3 17L10 3M3 17l14-5M3 17h4M7 12l5-9M7 15l10-7" stroke="#9fb2bc" stroke-width="1.800" fill="none"/></symbol>
<symbol id="t-layer" viewBox="0 0 20 20"><path d="M1 8l10-6 8 4-10 6z" fill="#7fd0e8" stroke="#246"/><path d="M1 12l8 4 10-6" fill="none" stroke="#d8c020" stroke-width="2.400"/><path d="M1 15l8 4 10-6" fill="none" stroke="#246"/></symbol>
<symbol id="t-model" viewBox="0 0 20 20"><path d="M1 6l6-2 12 0v10l-4 3H4l-3-3z" fill="#1e6e8e" stroke="#123"/><path d="M5 8h8v5H5z" fill="none" stroke="#7fd0e8"/></symbol>
<symbol id="t-stock" viewBox="0 0 20 20"><path d="M10 2l3 3v3l3 2v3l3 2-9 4-9-4 3-2v-3l3-2V5z" fill="#c83cb0" stroke="#82207a"/><path d="M1 15l9 3 9-3M4 11l6 3 6-3M7 7l3 2 3-2" fill="none" stroke="#f0a0e8"/></symbol>
<symbol id="t-group" viewBox="0 0 20 20"><path d="M3 11l6-5h5l3 2-5 6H5z" fill="#b8dee4" stroke="#9bb"/><path d="M8 7l5-4h4l1 2-4 3" fill="#d0e8ec" stroke="#9bb"/></symbol>
<symbol id="t-macro" viewBox="0 0 20 20"><rect x="1" y="4" width="18" height="12" fill="#4a7fa0" stroke="#123"/><path d="M4 8h2v3H4zM8 8h2v3H8zM12 8h2v3h-2z" fill="#dff"/></symbol>
<symbol id="t-stack" viewBox="0 0 20 20"><path d="M2 6l8-4 8 4-8 4z" fill="#2cb84c" stroke="#0b5e1b"/><path d="M2 10l8 4 8-4M2 14l8 4 8-4" fill="none" stroke="#1a9a3a" stroke-width="2"/></symbol>
<symbol id="t-stack2" viewBox="0 0 20 20"><path d="M2 8l8-5 8 3v7l-8 5-8-3z" fill="#22b84c" stroke="#0b5e1b"/><path d="M5 8l6-3 4 2-6 4z" fill="#7fe0ee"/></symbol>
<symbol id="t-folder" viewBox="0 0 20 20"><path d="M3 5l1-2h6v2h7v13H5z" fill="#a8dcd8" stroke="#7abab8"/><path d="M3 7h14" stroke="#dff4f2"/></symbol>
<symbol id="tab-tree" viewBox="0 0 24 24"><path d="M5 2v20M5 7h6M5 14h5M11 7v8M11 9h7M10 18h5" stroke="#111" fill="none"/><path d="M3 1h4v3H3zM9 6h3v3H9zM15 8h3v3h-3zM9 13h3v3H9zM14 16h4v3h-4z" fill="#2828c8"/></symbol>
<symbol id="tab-globe" viewBox="0 0 24 24"><circle cx="12" cy="12" r="11" fill="#1e5ab0"/><path d="M5 4c4-3 9-3 13 0 2 3 1 6-3 6-1 3-4 4-5 9-3-2-2-6-5-8-2-2-2-5 0-7z" fill="#2ca850"/></symbol>
<symbol id="tab-trash" viewBox="0 0 24 24"><path d="M3 4h18l-2 18H5z" fill="#e6e6e6" stroke="#ccc"/><path d="M9 12l4-2 3 4-4 2z" fill="#d6d6d6"/></symbol>
</svg>
<div class="win">
  <header class="title">
    <span class="appicon">P</span>
    <span class="ttext">Autodesk PowerMill Ultimate 2017</span>
    <span class="tproj">[ 可编辑项目 * A1 ]</span>
    <span class="wbtns"><span class="wb"><span class="wmin"></span></span><span class="wb"><span class="wmax"></span></span><span class="wb wclose">&#x2715;</span></span>
  </header>
  <nav class="menu"><span>文件(F)</span><span>查看(V)</span><span>插入(I)</span><span>显示(D)</span><span>工具(T)</span><span>帮助(H)</span></nav>

  <div class="tb r1"><div class="band">
    <svg class="ic"><use href="#open"/></svg><svg class="ic"><use href="#save"/></svg><b class="s"></b>
    <svg class="ic m2"><use href="#batch"/></svg><b class="s"></b>
    <svg class="ic m2"><use href="#block"/></svg><svg class="ic"><use href="#leads"/></svg><svg class="ic"><use href="#tp"/></svg><svg class="ic"><use href="#ball"/></svg><svg class="ic m2"><use href="#uu"/></svg><svg class="ic"><use href="#axpen"/></svg><svg class="ic m2"><use href="#dots"/></svg><svg class="ic"><use href="#tcalc"/></svg><b class="s"></b>
    <svg class="ic m2"><use href="#cutsurf"/></svg><b class="s"></b>
    <svg class="ic"><use href="#gs"/></svg>
    <div class="panel strategy m4"><svg class="ic"><use href="#glist"/></svg><span class="stext">平行精加工</span><i class="caret"></i></div>
    <b class="s m8"></b>
    <svg class="ic m2"><use href="#burst"/></svg><svg class="ic"><use href="#chk"/></svg><svg class="ic"><use href="#calc"/></svg><svg class="ic"><use href="#ruler"/></svg><b class="s"></b>
    <svg class="ic m2"><use href="#xarrows"/></svg><b class="s"></b>
    <svg class="ic m2"><use href="#binoc"/></svg><svg class="xb"><use href="#xb"/></svg><b class="bd"></b>
    <svg class="ic m2"><use href="#redball"/></svg><b class="s"></b>
    <svg class="ic m2"><use href="#gblock"/></svg><span class="act"><svg class="ic"><use href="#gface"/></svg></span><svg class="ic"><use href="#gface"/></svg><svg class="ic m2"><use href="#gstar"/></svg><svg class="ic"><use href="#gface"/></svg><svg class="ic"><use href="#gcap"/></svg><svg class="ic"><use href="#garrow"/></svg><b class="s"></b>
    <svg class="ic m2"><use href="#gbar"/></svg><b class="s"></b>
    <svg class="ic m2"><use href="#gcopy"/></svg><svg class="ic m2"><use href="#gcopy"/></svg><svg class="ic"><use href="#gfloppy"/></svg><b class="s"></b>
    <svg class="ic m2"><use href="#gzero"/></svg><svg class="xb m5"><use href="#xb"/></svg><b class="bd m3"></b>
    <svg class="ic m2"><use href="#gs"/></svg>
    <div class="combo c122 m8"><i class="caret"></i></div>
    <svg class="ic m12"><use href="#t-tools"/></svg>
    <div class="combo c120 m3"><i class="caret"></i></div>
    <svg class="ic m12"><use href="#bulbg"/></svg><b class="s"></b>
    <div class="panel ucs m4"><span class="ucsn">1</span><svg class="ic"><use href="#ucsred"/></svg><i class="caret"></i></div>
    <svg class="ic m3"><use href="#gfirst"/></svg><svg class="ic m2"><use href="#gprev"/></svg><svg class="ic"><use href="#gplay"/></svg><svg class="ic m2"><use href="#gnext"/></svg><svg class="ic"><use href="#glast"/></svg>
    <div class="slider m7"><i class="thumb"></i></div>
    <b class="s m28"></b>
    <svg class="ic m2"><use href="#machfire"/></svg><span class="act"><svg class="ic"><use href="#fire"/></svg></span><svg class="xb m9"><use href="#xb"/></svg>
  </div></div>

  <div class="tb r2"><div class="band">
    <svg class="ic"><use href="#star"/></svg>
    <div class="combo c120 m10"><i class="caret"></i></div>
    <svg class="ic m12"><use href="#xstar"/></svg><svg class="ic"><use href="#cross"/></svg><svg class="ic"><use href="#gwave"/></svg><b class="s m5"></b>
    <svg class="ic"><use href="#gopen"/></svg><svg class="ic"><use href="#gfloppy"/></svg><b class="s"></b>
    <svg class="ic m2"><use href="#gbound"/></svg><svg class="ic"><use href="#gsq"/></svg><svg class="ic m2"><use href="#ghole"/></svg><svg class="ic"><use href="#poly"/></svg><b class="s"></b>
    <svg class="ic m2"><use href="#gspin"/></svg><svg class="ic"><use href="#xpen"/></svg><svg class="ic"><use href="#eraser"/></svg><svg class="ic m2"><use href="#gundo"/></svg><svg class="ic"><use href="#gredo"/></svg><svg class="ic"><use href="#gx"/></svg><svg class="xb m7"><use href="#xb"/></svg><b class="bd"></b>
    <div class="combo c120 m4"><span class="ctext">1</span><i class="caret"></i></div>
    <svg class="ic m3"><use href="#gstack"/></svg><b class="s"></b>
    <svg class="ic m2"><use href="#spin"/></svg><svg class="ic"><use href="#pw"/></svg><svg class="ic m2"><use href="#gw"/></svg><svg class="ic"><use href="#cycle"/></svg><svg class="ic"><use href="#goldup"/></svg><svg class="ic"><use href="#pipe"/></svg><svg class="ic m2"><use href="#greenz"/></svg><svg class="ic"><use href="#table"/></svg><svg class="ic m2"><use href="#docs"/></svg><svg class="ic"><use href="#clock"/></svg><svg class="ic"><use href="#bx"/></svg><b class="s m4"></b>
    <span class="act m2"><svg class="ic"><use href="#lines"/></svg></span><span class="act"><svg class="ic"><use href="#pinkcorner"/></svg></span><span class="act"><svg class="ic"><use href="#bluearcs"/></svg></span><svg class="ic m2"><use href="#redsq"/></svg><svg class="ic"><use href="#gsquig"/></svg><svg class="ic"><use href="#axpen2"/></svg><svg class="ic"><use href="#gdisk"/></svg><svg class="ic m2"><use href="#gs2"/></svg><svg class="ic"><use href="#pyr"/></svg><svg class="ic"><use href="#pyr2"/></svg><b class="s"></b>
    <svg class="ic m3"><use href="#find"/></svg><svg class="ic"><use href="#gpill"/></svg><svg class="ic"><use href="#gu"/></svg><svg class="ic"><use href="#chart"/></svg><svg class="xb"><use href="#xb"/></svg>
  </div></div>

  <div class="tb r3"><div class="band">
    <div class="panel cnew"><svg class="ic"><use href="#box2"/></svg><i class="caret"></i></div>
    <div class="combo c119 m9"><i class="caret"></i></div>
    <b class="s m8"></b>
    <svg class="ic m3"><use href="#gopen"/></svg><svg class="ic"><use href="#gfloppy"/></svg><b class="s"></b>
    <svg class="ic"><use href="#gbound"/></svg><svg class="ic m2"><use href="#gstar"/></svg><svg class="ic"><use href="#gsq"/></svg><svg class="ic"><use href="#ghole"/></svg><svg class="ic"><use href="#poly"/></svg><b class="s"></b>
    <svg class="ic m2"><use href="#gspin"/></svg><svg class="ic"><use href="#xpen"/></svg><svg class="ic"><use href="#gzero"/></svg><svg class="ic m2"><use href="#eraser"/></svg><svg class="ic"><use href="#gundo"/></svg><svg class="ic"><use href="#gredo"/></svg><svg class="ic m2"><use href="#gx"/></svg><svg class="xb m6"><use href="#xb"/></svg><b class="bd"></b>
    <svg class="ic"><use href="#key"/></svg><b class="s m8"></b>
    <svg class="ic"><use href="#block"/></svg><svg class="ic m2"><use href="#goldball"/></svg><b class="s"></b>
    <svg class="ic"><use href="#cfg"/></svg><svg class="ic m2"><use href="#gear"/></svg><svg class="ic"><use href="#machb"/></svg><b class="s"></b>
    <svg class="ic"><use href="#lprev"/></svg><svg class="ic m2"><use href="#lgear"/></svg><svg class="ic m2"><use href="#lnext"/></svg><b class="s"></b>
    <svg class="ic"><use href="#wave"/></svg><svg class="ic"><use href="#ring"/></svg><svg class="ic m2"><use href="#link"/></svg><svg class="ic"><use href="#timer"/></svg><b class="s m6"></b>
    <svg class="ic"><use href="#binoc"/></svg><svg class="ic"><use href="#tool"/></svg><svg class="ic"><use href="#doc"/></svg><svg class="ic m2"><use href="#green"/></svg><b class="s"></b>
    <svg class="ic"><use href="#tp"/></svg><svg class="xb m9"><use href="#xb"/></svg>
  </div></div>

  <main class="main">
    <aside class="left">
      <div class="phead"><div class="grip"></div><svg class="pbtn" viewBox="0 0 14 14"><rect width="14" height="14" fill="#e4e8ee"/><path d="M5 2h7v6H9M2 5h7v7H2z" fill="none" stroke="#555" stroke-width="1.200"/></svg><svg class="pbtn" viewBox="0 0 14 14"><rect width="14" height="14" fill="#dfe6ee"/><path d="M3 3l8 8M11 3l-8 8" stroke="#444" stroke-width="2"/></svg></div>
      <div class="treebox">
        <div class="tabs">
          <span class="tab on"><svg class="tabi"><use href="#tab-tree"/></svg></span>
          <span class="tab"><svg class="tabi"><use href="#tab-globe"/></svg></span>
          <span class="tab"><svg class="tabi"><use href="#tab-trash"/></svg></span>
        </div>
        <div class="tabgap"></div>
        <div class="tree">
          <div class="row"><span class="c first h"><i class="tw">+</i></span><span class="c"><svg class="ti"><use href="#t-act"/></svg></span><span class="lb">激活</span></div>
          <div class="row"><span class="c v h"></span><span class="c"><svg class="ti"><use href="#mach"/></svg></span><span class="lb">机床</span></div>
          <div class="row"><span class="c v h"><i class="tw">+</i></span><span class="c"><svg class="ti"><use href="#t-nc"/></svg></span><span class="lb">NC程序</span></div>
          <div class="row"><span class="c v h"><i class="tw">&#x2212;</i></span><span class="c"><svg class="ti"><use href="#gs"/></svg></span><span class="lb bold">刀具路径</span></div>
          <div class="row"><span class="c v"></span><span class="c v h"><i class="tw">&#x2212;</i></span><span class="c"><svg class="ti"><use href="#t-folder"/></svg></span><span class="lb l1">659-1</span></div>
          <div class="row"><span class="c v"></span><span class="c v"></span><span class="c v h"><i class="tw">+</i></span><span class="c"><svg class="ti"><use href="#check"/></svg></span><svg class="ts"><use href="#bulby"/></svg><svg class="ti"><use href="#t-stack"/></svg><span class="lb cur">&gt; <em>1</em></span></div>
          <div class="row"><span class="c v"></span><span class="c v"></span><span class="c last h"><i class="tw">+</i></span><span class="c"><svg class="ti"><use href="#check"/></svg></span><svg class="ts"><use href="#bulbg"/></svg><svg class="ti"><use href="#t-stack2"/></svg><span class="lb cur2">2</span></div>
          <div class="row"><span class="c v"></span><span class="c v h"><i class="tw">+</i></span><span class="c"><svg class="ti"><use href="#t-folder"/></svg></span><span class="lb l1">659-2</span></div>
          <div class="row"><span class="c v"></span><span class="c v h"><i class="tw">+</i></span><span class="c"><svg class="ti"><use href="#t-folder"/></svg></span><span class="lb l1">659-3</span></div>
          <div class="row"><span class="c v"></span><span class="c v h"><i class="tw">+</i></span><span class="c"><svg class="ti"><use href="#t-folder"/></svg></span><span class="lb l1">659-4</span></div>
          <div class="row"><span class="c v"></span><span class="c v h"></span><span class="c"><svg class="ti"><use href="#t-folder"/></svg></span><span class="lb l1">&gt; <em>A-01</em></span></div>
          <div class="row"><span class="c v"></span><span class="c v h"></span><span class="c"><svg class="ti"><use href="#t-folder"/></svg></span><span class="lb l1">A-02</span></div>
          <div class="row"><span class="c v"></span><span class="c v h"></span><span class="c"><svg class="ti"><use href="#t-folder"/></svg></span><span class="lb l1">A-03</span></div>
          <div class="row"><span class="c v"></span><span class="c v h"></span><span class="c"><svg class="ti"><use href="#t-folder"/></svg></span><span class="lb l1">A-04</span></div>
          <div class="row"><span class="c v"></span><span class="c v h"></span><span class="c"><svg class="ti"><use href="#t-folder"/></svg></span><span class="lb l1">A-05</span></div>
          <div class="row"><span class="c v"></span><span class="c v h"></span><span class="c"><svg class="ti"><use href="#t-folder"/></svg></span><span class="lb l1">A-06</span></div>
          <div class="row"><span class="c v"></span><span class="c v h"></span><span class="c"><svg class="ti"><use href="#t-folder"/></svg></span><span class="lb l1">A-07</span></div>
          <div class="row"><span class="c v"></span><span class="c v h"></span><span class="c"><svg class="ti"><use href="#t-folder"/></svg></span><span class="lb l1">A-08</span></div>
          <div class="row"><span class="c v"></span><span class="c last h"></span><span class="c"><svg class="ti"><use href="#t-folder"/></svg></span><span class="lb l1">A-09</span></div>
          <div class="row"><span class="c v h"><i class="tw">+</i></span><span class="c"><svg class="ti"><use href="#t-tools"/></svg></span><span class="lb bold">刀具</span></div>
          <div class="row"><span class="c v h"><i class="tw">+</i></span><span class="c"><svg class="ti"><use href="#t-bound"/></svg></span><span class="lb">边界</span></div>
          <div class="row"><span class="c v h"><i class="tw">+</i></span><span class="c"><svg class="ti"><use href="#t-ref"/></svg></span><span class="lb">参考线</span></div>
          <div class="row"><span class="c v h"></span><span class="c"><svg class="ti"><use href="#t-hole"/></svg></span><span class="lb">孔特征设置</span></div>
          <div class="row"><span class="c v h"></span><span class="c"><svg class="ti"><use href="#t-feat"/></svg></span><span class="lb">特征组</span></div>
          <div class="row"><span class="c v h"></span><span class="c"><svg class="ti"><use href="#t-ucs"/></svg></span><span class="lb">用户坐标系</span></div>
          <div class="row"><span class="c v h"><i class="tw">+</i></span><span class="c"><svg class="ti"><use href="#t-layer"/></svg></span><span class="lb">层和组合</span></div>
          <div class="row"><span class="c v h"><i class="tw">+</i></span><span class="c"><svg class="ti"><use href="#t-model"/></svg></span><span class="lb">模型</span></div>
          <div class="row"><span class="c v h"></span><span class="c"><svg class="ti"><use href="#t-stock"/></svg></span><span class="lb">残留模型</span></div>
          <div class="row"><span class="c v h"></span><span class="c"><svg class="ti"><use href="#t-group"/></svg></span><span class="lb">组</span></div>
          <div class="row"><span class="c last h"><i class="tw">+</i></span><span class="c"><svg class="ti"><use href="#t-macro"/></svg></span><span class="lb">宏</span></div>
        </div>
      </div>
    </aside>

    <section class="view">
      <svg class="scene" viewBox="261 145 1621 937" width="1621" height="937">
        <defs>
          <linearGradient id="domeG" gradientUnits="userSpaceOnUse" x1="850" y1="400" x2="1000" y2="1150"><stop offset="0" stop-color="#239ce6"/><stop offset=".4" stop-color="#2095dd"/><stop offset=".75" stop-color="#17699f"/><stop offset="1" stop-color="#14608f"/></linearGradient>
          <linearGradient id="rimG" gradientUnits="userSpaceOnUse" x1="480" y1="580" x2="780" y2="1000"><stop offset="0" stop-color="#1a7cba"/><stop offset=".2" stop-color="#5cbcf0"/><stop offset=".36" stop-color="#2493dc"/><stop offset="1" stop-color="#176ba6"/></linearGradient>
          <mask id="outside" maskUnits="userSpaceOnUse" x="-200" y="-200" width="2400" height="2400">
            <rect x="-200" y="-200" width="2400" height="2400" fill="#fff"/>
            <path d="M340,880 C340,760 360,660 405,600 C510,550 700,465 850,395 C905,372 960,385 1020,425 C1120,500 1240,730 1300,1010 L1405,1060 L1405,1440 L700,1440 L250,890 Z" fill="#000"/>
          </mask>
        </defs>
        <g class="cube">
          <path d="M1790,185 L1828,172 L1852,192 L1814,207 Z" fill="#7d8a94"/>
          <path d="M1790,185 L1814,207 L1815,243 L1795,223 Z" fill="#6e7c86"/>
          <path d="M1814,207 L1852,192 L1852,225 L1815,243 Z" fill="#808d96"/>
          <text class="cubetxt" x="1809" y="194" transform="rotate(-22 1809 194)">上</text>
          <text class="cubetxt" x="1824" y="224" transform="rotate(-22 1824 224)">右</text>
          <text class="cubetxt" x="1797" y="216" transform="rotate(45 1797 216)">前</text>
        </g>
        <g class="toolwire" transform="translate(940 140) scale(.33333)">
          <ellipse cx="342" cy="338" rx="137" ry="85" transform="rotate(-3 342 338)"/>
          <path d="M172,15 L205,330 L210,365M193,15 L222,305M228,15 L258,270 L270,415M283,15 L310,255M333,15 L360,253 L375,415M388,15 L412,262M422,15 L450,280 L460,372M445,15 L478,312"/>
          <path d="M342,338 L222,305M342,338 L210,365M342,338 L270,415M342,338 L310,255M342,338 L360,253M342,338 L412,262M342,338 L478,312M342,338 L460,372M342,338 L375,415"/>
          <circle cx="342" cy="338" r="12"/>
          <path class="cyan" d="M342,345 L392,820"/>
          <path class="reddash" d="M100,440 L150,915"/>
        </g>
        <g transform="translate(620 400) scale(.33333)">
          <path class="cyanw" d="M1350,0 L1410,600"/>
          <g id="stripes"></g>
          <path class="redl" d="M1110,130 L1145,470"/>
          <path class="redl dash2" d="M1355,60 L1395,430"/>
          <g id="wireloops" mask="url(#outside)"></g>
          <path fill="#135f8f" d="M700,1295 L820,1305 L1395,1065 L1410,1190 L820,1435 L710,1420 Z"/>
          <path fill="#14699a" d="M245,810 L258,950 L710,1420 L700,1295 Z"/>
          <path fill="#1e9cc4" d="M245,810 L420,730 L1210,860 L1400,1050 L1395,1065 L820,1305 L700,1295 Z"/>
          <path fill="url(#domeG)" d="M430,850 C425,760 420,660 445,610 C460,575 490,560 520,568 L880,410 C960,385 1040,480 1090,570 C1160,700 1215,860 1225,1040 L820,1200 L762,1190 Z"/>
          <path fill="url(#rimG)" d="M430,700 C435,610 470,560 510,566 C580,585 650,680 700,790 C760,920 810,1060 820,1197 L762,1190 L750,1060 C700,880 610,700 530,640 C480,615 440,640 430,700 Z"/>
          <path fill="#14608f" d="M430,850 C425,780 425,720 430,700 C440,640 480,615 530,640 C610,700 700,880 750,1060 L762,1190 Z"/>
          <path class="edge" d="M490,565 C560,575 640,660 700,790 C760,920 810,1060 820,1195M430,700 C440,640 480,615 530,640 C610,700 700,880 750,1060 L762,1190M440,690 C450,650 485,628 525,650 C600,705 690,885 740,1060M427,670 L432,850 L762,1190M1220,950 L1225,1040M820,1305 L1395,1065M700,1295 L820,1305M700,1295 L710,1420M810,1305 L820,1435M1395,1070 L1400,1190M250,850 L695,1292"/>
          <g id="platelines"></g>
          <g id="loops"></g>
          <g id="hoops"></g>
          <path class="triad" d="M778,540 L768,430 L772,415 L762,350 L805,408 L790,410 L800,510 L905,470 L908,455 L990,457 L935,510 L930,500 L815,540 L850,585 L862,585 L895,660 L848,620 L850,605 L780,540 Z M790,440 L792,520 L800,510 M815,520 L960,465 M800,555 L880,640"/>
          <text class="triadt" x="783" y="335" transform="rotate(-20 783 335)">Z</text>
          <text class="triadt" x="1012" y="442">Y</text>
        </g>
        <g class="mini">
          <path class="mz" d="M291,1052 L290,1034"/><path class="mzh" d="M290.500,1028 L294,1038 L287,1038 Z"/>
          <path class="my" d="M292,1051 L312,1042"/><path class="myh" d="M319,1040 L311,1039 L313,1045 Z"/>
          <path class="mx" d="M292,1052 L303,1062"/><path class="mxh" d="M300,1059 L307,1066 L304,1058 Z"/>
          <text class="tz" x="293" y="1024">Z</text><text class="ty" x="320" y="1038">Y</text><text class="tx" x="311" y="1062">X</text>
        </g>
      </svg>
      <div class="sogou">
        <span class="slogo">S</span>
        <div class="sbar"><span class="sen">英</span><span class="scomma">&#xB0;,</span>
          <svg class="sicon" viewBox="0 0 18 14"><rect x=".8" y=".8" width="16.400" height="12.400" rx="2" fill="none" stroke="#1eaa5a" stroke-width="1.600"/><path d="M3 4h2v2H3zM6 4h2v2H6zM9 4h2v2H9zM12 4h3v2h-3zM3 7h2v2H3zM6 7h2v2H6zM9 7h2v2H9zM12 7h3v2h-3zM5 10h8v1.500H5z" fill="#1eaa5a"/></svg>
          <svg class="sicon" viewBox="0 0 18 16"><circle cx="7" cy="3.500" r="3.200" fill="#1eaa5a"/><path d="M0 14c0-5 3-7 7-7h4v8H2z" fill="#1eaa5a"/><rect x="8" y="8" width="10" height="8" fill="#fff" stroke="#1eaa5a"/><path d="M10.500 10v4M13 10h2.500v4H13z" fill="none" stroke="#1eaa5a"/></svg>
          <svg class="sicon sq" viewBox="0 0 14 14"><rect width="6.200" height="6.200" fill="#1eaa5a"/><rect x="8.500" y=".8" width="4.700" height="4.700" fill="none" stroke="#1eaa5a" stroke-width="1.600"/><rect y="7.800" width="6.200" height="6.200" fill="#1eaa5a"/><rect x="7.800" y="7.800" width="6.200" height="6.200" fill="#1eaa5a"/></svg>
        </div>
      </div>
    </section>

    <aside class="rtool">
      <svg class="vi"><use href="#mach"/></svg><svg class="vi"><use href="#c-top"/></svg><svg class="vi"><use href="#c-right"/></svg><svg class="vi"><use href="#c-front"/></svg><svg class="vi"><use href="#c-iso"/></svg><svg class="vi"><use href="#zback"/></svg><svg class="vi"><use href="#refresh"/></svg><svg class="vi"><use href="#zfit"/></svg><svg class="vi"><use href="#zsq"/></svg>
      <b class="vs"></b>
      <svg class="vi"><use href="#solid"/></svg>
      <b class="vs vs1"></b>
      <span class="vact"><svg class="vi2"><use href="#gball"/></svg></span>
      <svg class="vi"><use href="#wireglobe"/></svg>
      <b class="vs vs2"></b>
      <svg class="vi"><use href="#cursel"/></svg><svg class="vi"><use href="#curund"/></svg>
      <svg class="xb vx"><use href="#xb"/></svg>
      <b class="vs vs3"></b>
    </aside>
  </main>

  <div class="tb rb"><div class="band">
    <div class="panel bnew"><svg class="ic"><use href="#tool2"/></svg><i class="caret"></i></div>
    <svg class="ic m7"><use href="#book1"/></svg><svg class="ic m2"><use href="#book2"/></svg><svg class="ic"><use href="#book3"/></svg>
    <div class="combo c120 m2"><span class="ctext">D10</span><i class="caret"></i></div>
    <svg class="ic m3"><use href="#gstack"/></svg><b class="s m12"></b>
    <svg class="ic m2"><use href="#pipe"/></svg><b class="s m53"></b>
    <svg class="ic m2"><use href="#axpen2"/></svg><svg class="ic"><use href="#rgb"/></svg><svg class="ic"><use href="#grb"/></svg><b class="s"></b>
    <svg class="ic m2"><use href="#bpen"/></svg><svg class="ic"><use href="#bx"/></svg><svg class="xb m7"><use href="#xb"/></svg>
  </div></div>
  <footer class="status">仿真控制</footer>

  <div class="wmark">
    <svg class="wlogo" viewBox="0 0 72 82"><path d="M36 0L72 20V62L36 82 0 62V20z" fill="#54ace0" opacity=".72"/><path d="M36 0L72 20 60 28 36 14 14 26 0 20z" fill="#1d6fa3" opacity=".45"/><path d="M36 26l17 10v19L36 65 19 55V36z" fill="#fff" opacity=".45"/><path d="M36 26l17 10-17 10-17-10z" fill="#d6eefa" opacity=".75"/><path d="M36 46v19L19 55V36zM36 46l17-10v19L36 65z" fill="#8cc8ee" opacity=".8"/></svg>
    <div class="wtext"><div class="wbig">3D世界网</div><div class="wurl">WWW.3DSJW.COM</div></div>
  </div>
</div>
<script src="script.js"></script>
</body>
</html>
```
FILE: styles.css
```css
*{box-sizing:border-box}
html,body{margin:0;padding:0;background:#fff}
body{width:1920px;height:1154px;overflow:hidden;font:12px "Noto Sans","Noto Sans CJK SC",sans-serif;color:#111}
.defs{position:absolute;width:0;height:0}
.win{position:relative;width:1920px;height:1154px;display:flex;flex-direction:column;padding:0 7px 8px;border:1px solid #39444e;border-radius:6px 6px 0 0;background:linear-gradient(#88a6c6 0,#b6d0e8 29px,#b9d3ec 29px)}
.title{height:29px;display:flex;align-items:center;margin-left:-6px;padding:4px 0 0 9px;position:relative}
.appicon{width:15px;height:16px;background:linear-gradient(#f2e4c8,#e8c89a);color:#d8701a;font:bold 14px/16px "Liberation Sans",sans-serif;text-align:center;margin-right:5px}
.ttext{font-size:12.300px;letter-spacing:0}
.tproj{margin-left:16px;font-size:12.200px}
.wbtns{margin-left:auto;display:flex;gap:3px;margin-right:1px;align-self:flex-start;margin-top:5px}
.wb{width:30px;height:17px;border:1px solid #6f8aa6;border-radius:2px;background:linear-gradient(#b8cfe4 0,#a2bcd6 50%,#7f9dbc 52%,#9cb8d2);display:flex;align-items:center;justify-content:center}
.wmin{width:10px;height:3px;background:#fff;border:1px solid #445;margin-top:5px}
.wmax{width:10px;height:9px;background:#fff;border:2px solid #445}
.wclose{background:linear-gradient(#dc9a90 0,#c8604e 50%,#b0382a 52%,#d07060);color:#fff;font:bold 12px/15px "DejaVu Sans",sans-serif;border-color:#8a4a44;text-shadow:0 0 1px #500}
.menu{height:20px;display:flex;align-items:center;gap:14.700px;padding-left:7px;background:linear-gradient(#fafbfe 0,#ecf0f9 25%,#d9e1f1 100%);border-top:1px solid #fff;flex:none}
.menu span{font-size:12px;color:#222}
.tb{flex:none;display:flex;background:#f0f0f0;height:31px;border-bottom:1px solid #a8a8a8}
.r1{height:32px;padding-left:1.750px;border-top:1px solid #d0d0d0}
.r2{padding-left:.750px}
.r3{padding:0 0 2px 2px;border-bottom:none}
.rb{padding-left:4px;border-top:1px solid #a8a8a8;border-bottom:1px solid #a8a8a8}
.band{display:flex;align-items:center;height:100%;border-right:1px solid #a8a8a8;padding-right:1px}
.ic{width:24.500px;height:20px;padding:0 2.250px;flex:none;display:block}
.xb{width:14px;height:16px;margin:0 2px;flex:none;display:block}
.s{display:block;flex:none;width:1px;height:24px;background:#a8a8a8;margin:0 4px}
.bd{display:block;flex:none;width:1px;height:100%;background:#b0b0b0;margin:0 1px}
.act{display:block;flex:none;width:24.500px;height:24px;border:1px solid #7c7c7c;border-radius:3px;background:#dcdcdc;padding:1px 0 0}
.act .ic{width:22.500px;padding:0 1.250px}
.m2{margin-left:2px}.m3{margin-left:3px}.m4{margin-left:4px}.m5{margin-left:5px}.m6{margin-left:6px}.m7{margin-left:7px}.m8{margin-left:8px}.m9{margin-left:9px}.m10{margin-left:10px}.m12{margin-left:12px}.m28{margin-left:28px}.m53{margin-left:53px}
.panel{flex:none;display:flex;align-items:center;background:#fff;border-radius:3px;height:26px}
.strategy{width:191px}
.stext{flex:1;font-size:12px;height:22px;line-height:22px;background:#f3f3f3;letter-spacing:.3px;margin-right:10px;padding-left:0}
.strategy .ic{width:20px;padding:0 2px 0 2px}
.strategy .caret{margin-right:7px}
.caret{display:block;flex:none;width:0;height:0;border:4px solid transparent;border-top:5px solid #111;border-bottom:0}
.ucs{width:45px;padding-right:5px;position:relative}
.ucs .ic{margin-right:auto;margin-left:-4px}
.ucsn{width:8px;padding-left:3px;font-size:14px;line-height:18px;margin-top:-4px;position:relative;z-index:1}
.cnew{width:46px;justify-content:space-between;padding:0 4px 0 2px}
.cnew .ic,.bnew .ic{background:#e8e8e8}
.bnew{width:43px;justify-content:space-between;padding:0 4px 0 0}
.combo{flex:none;height:24px;display:flex;align-items:center;justify-content:space-between;padding:0 3px 0 2px;background:linear-gradient(#f4f4f4 0,#f0f0f0 25%,#cfcfcf 100%);border-left:1px dotted #999;border-right:1px dotted #999}
.combo .caret{margin-left:auto}
.c122{width:122px}.c120{width:120px}.c119{width:119px}
.ctext{font-size:12px;padding-left:2px;color:#222}
.slider{flex:none;width:70px;height:22px;position:relative;background:linear-gradient(#bbb,#bbb) center/100% 2px no-repeat}
.thumb{position:absolute;left:11px;top:0;width:9px;height:22px;border:1px solid #888;border-radius:2px;background:#e4e4e4}
.main{flex:1;min-height:0;display:flex;border-top:1px solid #a0a0a0}
.left{flex:none;width:253px;background:#f0f0f0;display:flex;flex-direction:column;padding:0 9px 2px 3px;border-right:1px solid #fff}
.phead{height:17px;flex:none;display:flex;align-items:center;gap:2px;margin-right:-6px}
.grip{flex:1;height:6px;border-top:1px solid #a8a8a8;border-bottom:1px solid #a8a8a8;margin:2px 8px 0 1px}
.pbtn{width:13px;height:13px;margin-right:2px}
.treebox{flex:1;min-height:0;display:flex;flex-direction:column;background:#fff;border:1px solid #888;border-top:2px solid #888;border-right-color:#ccc;border-bottom-color:#ccc}
.tabs{height:35px;flex:none;display:flex;align-items:flex-end;padding-left:5px;gap:2px;background:#f0f0f0;border-bottom:1px solid #999}
.tab{width:34px;height:30px;background:#d8d8d8;border:1px solid #c4c4c4;border-bottom:0;display:flex;align-items:center;justify-content:center}
.tab.on{background:#fff}
.tabi{width:24px;height:24px}
.tabgap{height:3px;flex:none;background:#f0f0f0;border-bottom:1px solid #bbb}
.tree{flex:1;padding-left:2px;min-height:0}
.row{height:20px;display:flex;align-items:center}
.c{position:relative;display:flex;flex:none;width:19px;height:20px;align-items:center;justify-content:center}
.c.v::before,.c.first::before,.c.last::before{content:"";position:absolute;left:9px;width:0;border-left:1px dotted #777}
.c.v::before{top:0;bottom:0}
.c.first::before{top:10px;bottom:0}
.c.last::before{top:0;bottom:10px}
.c.h::after{content:"";position:absolute;left:10px;right:0;top:10px;height:0;border-top:1px dotted #777}
.tw{position:relative;z-index:1;width:9px;height:9px;margin-left:-1px;border:1px solid #8a9aaa;background:linear-gradient(#fff,#dde);font:normal 9px/7px "Liberation Mono",monospace;text-align:center;color:#123}
.ti{width:18px;height:18px;flex:none}
.ts{width:14px;height:16px;flex:none;margin-left:-2px}
.lb{white-space:nowrap;font-size:12px;color:#151515;margin-left:3px}
.lb.l1{margin-left:8px;letter-spacing:.2px}
.bold{font-weight:700}
.lb em{font-style:normal;font-weight:700}
.cur{background:#eee;margin-left:3px;padding:1px 6px 1px 3px;line-height:15px;width:24px}
.cur2{margin-left:3px;padding-left:3px}
.view{position:relative;flex:none;width:1621px;background:linear-gradient(#2e4a64 0,#1e3141 27%,#101a23 58%,#05080b 88%,#000 100%);overflow:hidden}
.scene{display:block}
.cube{opacity:.95}
.cubetxt{font:14px "Noto Sans CJK SC",sans-serif;fill:#6c7882}
.toolwire{fill:none;stroke:#f4f436;stroke-width:3.200}
.toolwire .cyan{stroke:#3fd7e4;stroke-width:3.500}
.toolwire .reddash{stroke:#b02a30;stroke-width:3.500;stroke-dasharray:14 8}
.cyanw{stroke:#3fd7e4;stroke-width:2.600;fill:none}
.redl{stroke:#d81c2c;stroke-width:3.500;fill:none}
.dash2{stroke-dasharray:30 6}
.edge{fill:none;stroke:#06121e;stroke-width:2.400}
#wireloops path{fill:none;stroke:#30cf30;stroke-width:2.800}
#loops path,#platelines path{fill:none;stroke:#22ea4d;stroke-width:3.200}
#hoops path{fill:none;stroke:#2ef02e;stroke-width:2.800}
#stripes path{fill:none;stroke-width:2.800}
.triad{fill:none;stroke:#fff;stroke-width:2.400}
.triadt{font:bold 36px "Noto Sans",sans-serif;fill:#eee}
.mini path{fill:none;stroke-width:1.600}
.mz{stroke:#3fe6ea}
.mzh{fill:#3fe6ea!important;stroke:#3fe6ea}
.my{stroke:#9a9a9a}
.myh{stroke:#aaa}
.mx{stroke:#fff}
.mxh{stroke:#fff}
.tz,.ty,.tx{font:bold 13px "Noto Sans",sans-serif}
.tz{fill:#3fe6ea}.ty{fill:#999}.tx{fill:#fff}
.sogou{position:absolute;left:1438px;top:835px;display:flex;align-items:center}
.slogo{position:relative;z-index:1;width:25px;height:23px;background:linear-gradient(#f27a30,#d8481a);border-radius:3px;transform:rotate(-12deg);color:#fff;font:italic bold 20px/23px "Liberation Sans",sans-serif;text-align:center}
.sbar{margin-left:-2px;width:116px;height:21px;background:#fff;display:flex;align-items:center;padding-left:10px;gap:0}
.sen{color:#1eaa5a;font:bold 14px/21px "Noto Sans CJK SC",sans-serif;width:24px}
.scomma{color:#1eaa5a;font:bold 11px/15px "Noto Sans",sans-serif;width:19px;letter-spacing:-1px}
.sicon{width:18px;height:15px;margin-right:7px;flex:none}
.sicon.sq{width:14px;height:14px;margin-right:0;margin-left:-2px}
.rtool{flex:none;width:30px;background:#f0f0f0;display:flex;flex-direction:column;align-items:center;padding-top:5px}
.vi{width:20px;height:20px;margin-bottom:4px;flex:none}
.vs{display:block;flex:none;width:24px;height:1px;background:#b0b0b0;margin:1px 0 7px}
.vs1{margin:1px 0 4px}
.vs2{margin:9px 0 8px}
.vs3{margin:1px 0 0}
.vact{width:24px;height:24px;border:1px solid #777;border-radius:3px;background:#dcdcdc;display:flex;align-items:center;justify-content:center;flex:none}
.vi2{width:20px;height:20px}
.vact+.vi{margin-top:2px}
.vx{margin:6px 0 2px}
.status{flex:none;height:32px;padding:0 0 0 3px;line-height:30px;font-size:12px;background:#f0f0f0;border-bottom:1px solid #a8a8a8;letter-spacing:-.1px}
.wmark{position:absolute;left:1636px;top:1058px;display:flex;align-items:flex-start;pointer-events:none}
.wlogo{width:72px;height:82px}
.wtext{margin-left:9px;margin-top:13px;color:rgba(255,255,255,.5)}
.wbig{font:bold 41px/42px "Liberation Sans","Noto Sans CJK SC",sans-serif;letter-spacing:1.500px;white-space:nowrap}
.wurl{font:bold 12px/14px "Liberation Sans",sans-serif;letter-spacing:5.300px;margin-top:2px;white-space:nowrap;color:rgba(255,255,255,.6)}
```
FILE: script.js
```js
// Toolpath geometry for the viewport, in the model group's coordinate space.
var NS = 'http://www.w3.org/2000/svg';
function add(id, d, stroke) {
  var p = document.createElementNS(NS, 'path');
  p.setAttribute('d', d);
  if (stroke) p.setAttribute('stroke', stroke);
  document.getElementById(id).appendChild(p);
}
var k, t;

// Outer wireframe loops: one rectangle per Z level, hidden where the arch and model sit.
for (k = 0; k < 15; k++) {
  var dx = 2.9 * k, dy = 26 * k;
  add('wireloops', 'M' + (80 + dx) + ',' + (420 + dy) +
    ' L' + (900 + dx) + ',' + (90 + dy) +
    ' L' + (1480 + dx) + ',' + (705 + dy) +
    ' L' + (660 + dx) + ',' + (1035 + dy) + ' Z');
}
add('wireloops', 'M250,380 L295,430M500,250 L555,320M820,250 L865,305');

// Green plate lines on the side faces.
for (k = 0; k < 6; k++) {
  add('platelines', 'M' + (250 + 2 * k) + ',' + (855 + 15 * k) + ' L' + (700 + 2 * k) + ',' + (1318 + 15 * k) +
    ' L' + (815 + 2 * k) + ',' + (1328 + 15 * k) + ' L' + (1405 + 2 * k) + ',' + (1085 + 14 * k));
}
add('platelines', 'M1000,790 L1075,870');

// Level loops: along the plate, round the front of the dome, and up across it.
// The low levels, which lie on the plate, run at twice the density.
for (k = 0; k <= 16; k += (k < 6 ? 0.5 : 1)) {
  var low = k <= 5;
  var cx = low ? 770 + 3 * k : 785 - 19.5 * (k - 5);
  var cy = low ? 1295 - 19 * k : 1200 - 36 * (k - 5);
  var y400 = low ? 914 - 22 * k : 804 - 10 * (k - 5);
  var m = (cy - y400) / (cx - 400);
  var lx = 292 + 7 * k;
  var rx = 1370 - 0.94 * k * k;
  var r = Math.min(60 + 7 * k, cx - lx - 15);
  add('loops', 'M' + lx + ',' + (y400 - m * (400 - lx)) +
    ' L' + (cx - r) + ',' + (cy - m * r) +
    ' Q' + cx + ',' + cy + ' ' + (cx + r * 1.2) + ',' + (cy - 0.38 * r * 1.2) +
    ' L' + rx + ',' + (cy - 0.38 * (rx - cx)));
}

// Arch hoops, interpolated between the outer and the inner silhouette.
var O = [[283, 860], [275, 720, 290, 620, 370, 545], [500, 490, 700, 400, 840, 325], [900, 300, 970, 305, 1040, 340], [1130, 400, 1300, 700, 1370, 1040]];
var I = [[340, 880], [340, 760, 360, 660, 405, 600], [510, 550, 700, 465, 850, 395], [905, 372, 960, 385, 1020, 425], [1120, 500, 1240, 730, 1300, 1010]];
for (t = 0; t <= 1.001; t += 0.1) {
  var d = '';
  for (var s = 0; s < O.length; s++) {
    var seg = O[s].map(function (v, i) { return (v + (I[s][i] - v) * t).toFixed(1); });
    d += s === 0 ? 'M' + seg.join(',') : ' C' + seg.join(' ');
  }
  add('hoops', d);
}

// Lead-in stripes beside the tool axis.
for (k = 0; k < 27; k++) {
  var col = k < 9 ? '#cc3cd8' : k < 17 ? '#ff4a78' : '#c87a3a';
  var x0 = k < 17 ? 1112 + 2 * k : 1146 + 15 * (k - 17);
  var y0 = k < 17 ? 130 + 21 * k : 487 + 16 * (k - 17);
  add('stripes', 'M' + x0 + ',' + y0 + ' L' + (1350 + 2.3 * k) + ',' + (40 + 21.5 * k), col);
}
```
